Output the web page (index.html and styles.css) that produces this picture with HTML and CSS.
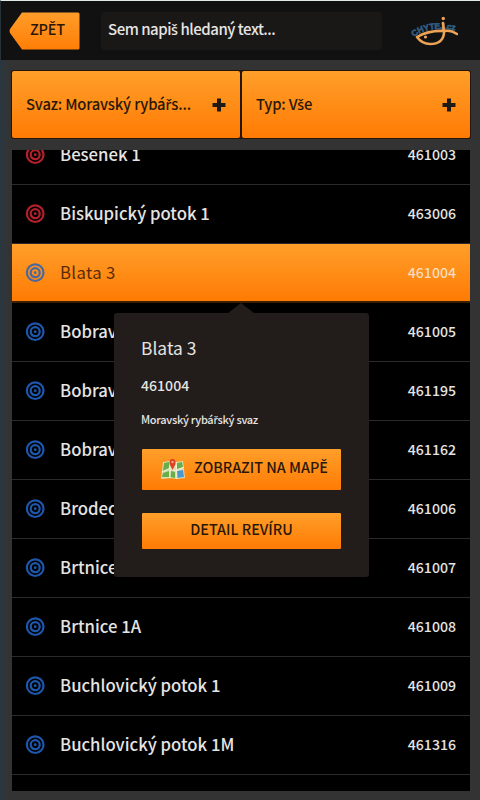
FILE: index.html
```
<!DOCTYPE html>
<html lang="cs">
<head>
<meta charset="utf-8">
<title>Revíry</title>
<link rel="stylesheet" href="styles.css">
</head>
<body>
<svg class="defs" aria-hidden="true">
  <symbol id="target" viewBox="0 0 20 20"><g fill="none" stroke="currentColor" stroke-width="2.200"><circle cx="10.200" cy="9.700" r="8.300"/><circle cx="10.200" cy="9.700" r="4.500"/></g><circle cx="10.200" cy="9.700" r="1.400" fill="currentColor"/></symbol>
  <symbol id="plus" viewBox="0 0 14 14"><path d="M5 0.5h4V5h4.5v4H9v4.500H5V9H0.500V5H5z" fill="#201a15"/></symbol>
</svg>
<header class="top">
  <a class="back"><svg viewBox="0 0 71 38"><defs><linearGradient id="g" x2="0" y2="1"><stop stop-color="#ff9d2a"/><stop offset="1" stop-color="#ff7e06"/></linearGradient></defs><path d="M13 .5H69q1.500 0 1.500 1.500V36q0 1.500-1.500 1.500H13L1 21q-1-2 0-4z" fill="url(#g)"/></svg><span>ZPĚT</span></a>
  <div class="search">Sem napi<i>š</i> hledaný text...</div>
  <svg class="logo" viewBox="0 0 48 32">
    <defs><path id="arc" d="M4 22Q18 10 48 16"/></defs>
    <text class="logo-text"><textPath href="#arc">CHYTEJ.cz</textPath></text>
    <path d="M47 19Q41 15 35 16Q19 15 7 22Q12 29 20 29Q33 29 34 18L33 8" fill="none" stroke="#eca355" stroke-width="2.600" stroke-linecap="round" stroke-linejoin="round"/>
    <circle cx="15.500" cy="22" r="1.600" fill="#eca355"/><circle cx="33.300" cy="3.500" r="1.700" fill="#eca355"/>
  </svg>
</header>
<main>
  <div class="filters">
    <div class="filter"><span>Svaz: Moravský rybá<i>ř</i>s...</span><svg><use href="#plus"/></svg></div>
    <div class="filter"><span>Typ: V<i>š</i>e</span><svg><use href="#plus"/></svg></div>
  </div>
  <div class="list">
    <div class="rows">
      <div class="row red"><svg><use href="#target"/></svg><span>Besének 1</span><b>461003</b></div>
      <div class="row red"><svg><use href="#target"/></svg><span>Biskupický potok 1</span><b>463006</b></div>
      <div class="row active"><svg><use href="#target"/></svg><span>Blata 3</span><b>461004</b></div>
      <div class="row"><svg><use href="#target"/></svg><span>Bobrava 1</span><b>461005</b></div>
      <div class="row"><svg><use href="#target"/></svg><span>Bobrava 2</span><b>461195</b></div>
      <div class="row"><svg><use href="#target"/></svg><span>Bobrava 3</span><b>461162</b></div>
      <div class="row"><svg><use href="#target"/></svg><span>Brodečka 1</span><b>461006</b></div>
      <div class="row"><svg><use href="#target"/></svg><span>Brtnice 1</span><b>461007</b></div>
      <div class="row"><svg><use href="#target"/></svg><span>Brtnice 1A</span><b>461008</b></div>
      <div class="row"><svg><use href="#target"/></svg><span>Buchlovický potok 1</span><b>461009</b></div>
      <div class="row"><svg><use href="#target"/></svg><span>Buchlovický potok 1M</span><b>461316</b></div>
    </div>
  </div>
</main>
<section class="popup">
  <h2>Blata 3</h2>
  <div class="code">461004</div>
  <div class="union">Moravský rybá<i>ř</i>ský svaz</div>
  <a class="btn map"><svg viewBox="0 0 26 24">
    <path d="M3 4l7-1 1 17-10 1zM10 3l6 1 1 17-7-1zM16 4l7-1 2 17-8 1z" fill="#d7dfb4"/>
    <path d="M4 5l5-1v7l-6 2zM3 15l6-2v6H2zM11 13l4 1v6l-5-1zM17 5l5-1 1 5-6 2z" fill="#69ae48"/>
    <path d="M17 13l6-1 1 7-7 1z" fill="#4d96d0"/>
    <path d="M2 14l8-4 6 3 8-4M10 3v17M16 4l1 17" stroke="#f4f2d4" fill="none"/>
    <path d="M12.500 12L9.500 6q-.5-5 3-5t3 5z" fill="#dc4020"/><circle cx="12.500" cy="4" r="1.200" fill="#efad87"/>
  </svg><span>ZOBRAZIT NA MAPĚ</span></a>
  <a class="btn detail"><span>DETAIL REVÍRU</span></a>
</section>
</body>
</html>
```
FILE: styles.css
```
* { box-sizing: border-box; }
body {
  margin: 0; width: 480px; height: 800px; overflow: hidden; position: relative;
  background: linear-gradient(90deg, #293740 0, #333 9px);
  font-family: "Noto Sans CJK SC", "Open Sans", sans-serif;
  font-weight: 500; color: #e6e4e2;
}
/* Carons on lowercase letters sit correctly in this face */
i { font-family: "Noto Sans", "Open Sans", sans-serif; font-style: normal; font-size: .96em; line-height: 1; }
.defs { position: absolute; width: 0; height: 0; }
.top {
  height: 60px; background: #111; border-top: 1px solid #dfe9e6; border-left: 1px solid #25323a;
  display: flex; align-items: center; padding: 0 22px 0 8px;
}
.back { width: 71px; height: 38px; display: grid; color: #2a1708; font-size: 14.500px; line-height: 34px; }
.back svg, .back span { grid-area: 1 / 1; }
.back svg { width: 71px; height: 38px; }
.back span { padding-left: 21px; z-index: 1; white-space: nowrap; letter-spacing: -.2px; }
.search {
  margin-left: 21px; width: 281px; height: 38px; border-radius: 3px; background: #191817;
  padding-left: 7px; font-size: 15px; letter-spacing: -.48px; line-height: 34px; white-space: nowrap;
}
.logo { width: 48px; height: 32px; margin-left: auto; }
.logo-text { font: bold 8.500px "Liberation Sans", sans-serif; fill: #315d80; stroke: #315d80; stroke-width: .6px; letter-spacing: -.2px; }
main { padding: 11px 9px 0 12px; }
.filters { display: grid; grid-template-columns: 1fr 1fr; height: 67px; margin-right: 1px; background: #241507; border-radius: 2px; gap: 2px; box-shadow: 0 0 0 1px #241507; }
.filter {
  display: flex; align-items: center; justify-content: space-between; padding: 0 14px; border-radius: 2px;
  background: linear-gradient(#ff9f2a, #ff7b04); color: #2a1708; font-size: 14.800px; letter-spacing: -.18px; white-space: nowrap;
}
.filter span { padding-bottom: 3px; }
.filter svg { width: 14px; height: 14px; }
.list { margin-top: 12px; height: 641px; margin-right: 1px; background: #000; overflow: hidden; }
.rows { margin-top: -24px; }
.row { height: 59px; border-bottom: 1px solid #2b2b2b; display: flex; align-items: center; padding: 0 14px 0 13px; white-space: nowrap; color: #e6e4e2; }
.row svg { width: 20px; height: 20px; color: #1d58ae; }
.row.red svg { color: #b5202c; }
.row span { margin-left: 15px; font-size: 16.700px; padding-bottom: 2px; }
.row b { margin-left: auto; font-weight: 500; font-size: 14.100px; padding-bottom: 2px; }
.row.active { background: linear-gradient(#ff9f2a, #ff7b04); border-bottom: 2px solid #3a1e06; }
.row.active svg { color: #4769a0; }
.row.active span { color: #5a2a08; font-weight: 400; letter-spacing: .35px; }
.row.active b { color: #f5dcc0; }
.popup {
  position: absolute; left: 114px; top: 313px; width: 255px; height: 264px; padding: 22px 28px 0;
  background: #221d1a; border-radius: 3px; display: flex; flex-direction: column;
}
.popup::before {
  content: ""; position: absolute; top: -10px; left: 114px;
  border: 13px solid transparent; border-top: 0; border-bottom: 10px solid #221d1a;
}
.popup h2 { margin: 0 -1px; font-size: 17.400px; font-weight: 400; line-height: 26px; }
.code { margin: 13px -1px 0; font-size: 14.100px; line-height: 22px; }
.union { margin: 14px -1px 0; font-size: 11px; letter-spacing: -.3px; line-height: 18px; }
.btn { background: linear-gradient(#ff9f2a, #ff7b04); border-radius: 1px; color: #2a1708; font-size: 14.400px; display: flex; align-items: center; white-space: nowrap; flex: none; }
.btn span { padding-bottom: 6px; }
.map { height: 41px; margin-top: 21px; padding-left: 18px; }
.map svg { width: 26px; height: 24px; margin-right: 8px; }
.detail { height: 36px; margin-top: 23px; justify-content: center; }
```
